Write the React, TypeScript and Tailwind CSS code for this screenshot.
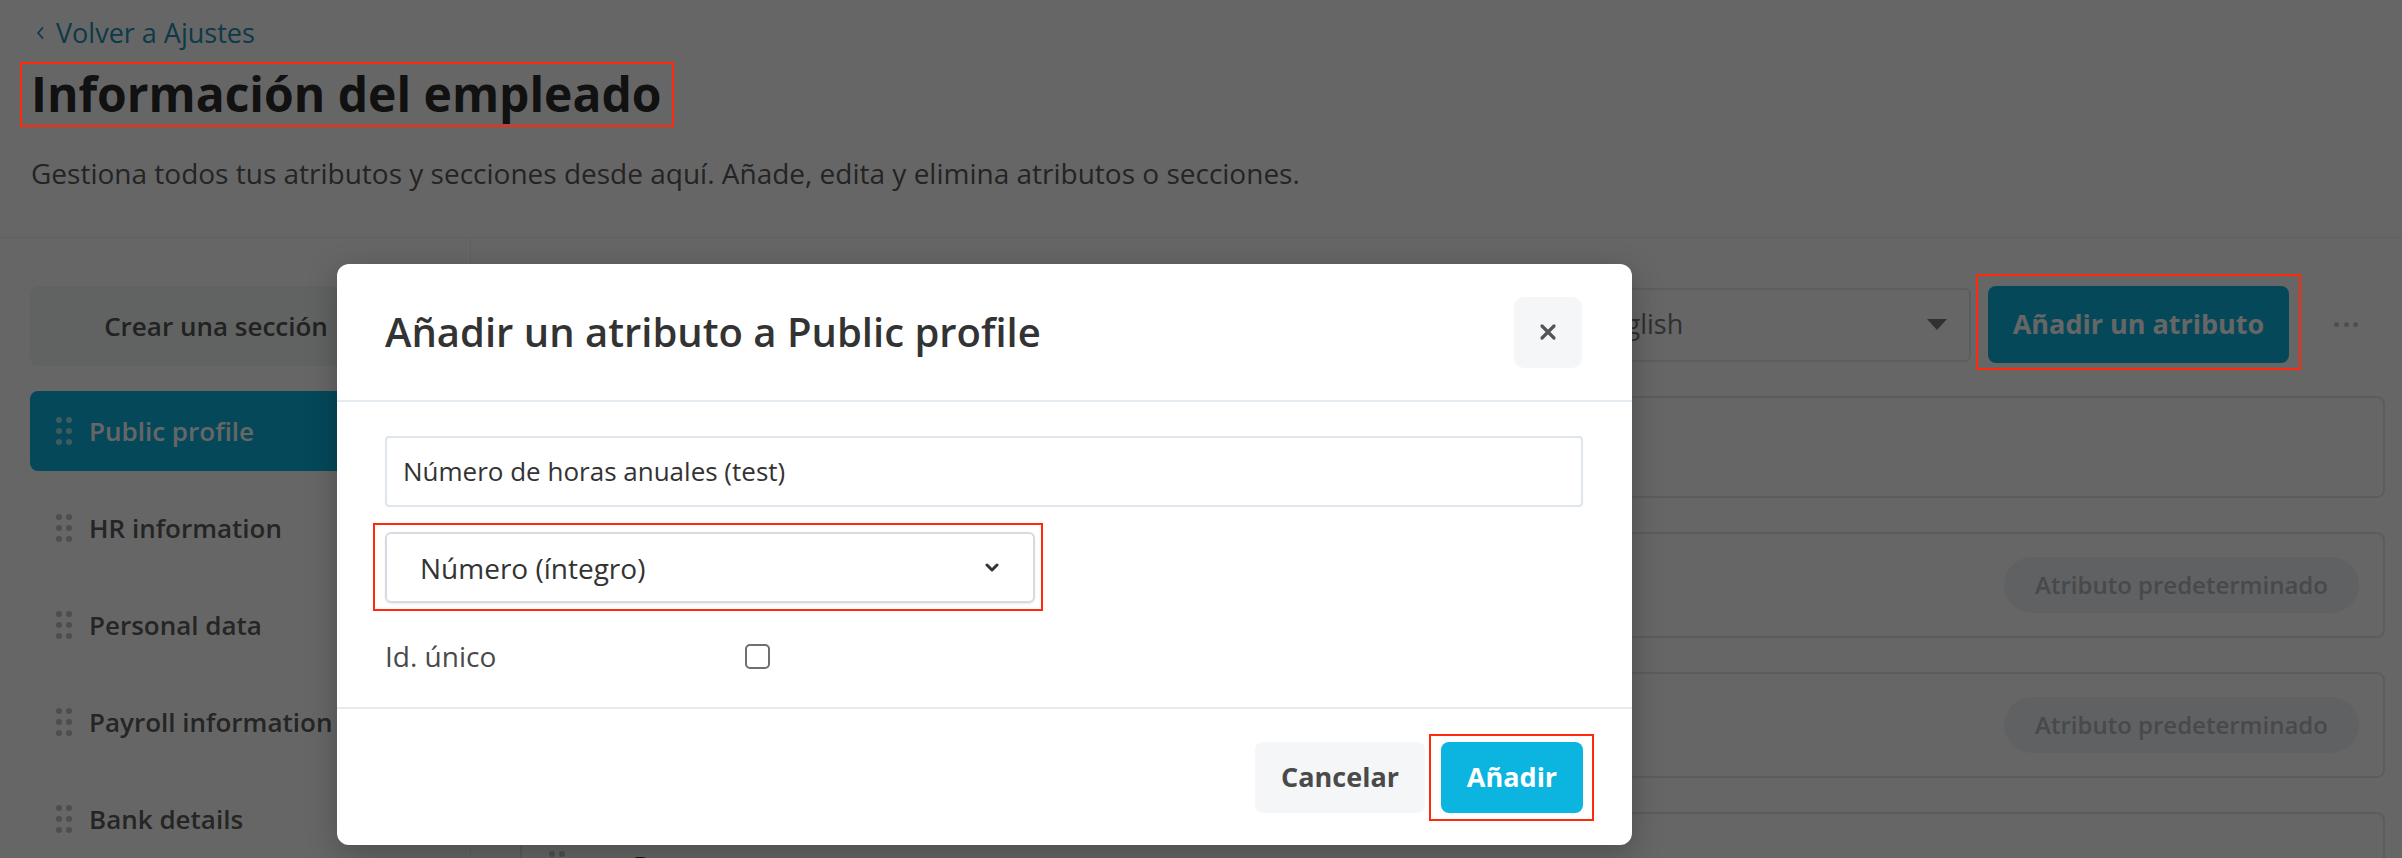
import React from 'react'

function DragDots({ className = '' }: { className?: string }) {
  return (
    <div className={`grid grid-cols-2 gap-x-[4px] gap-y-[5px] ${className}`}>
      {[0, 1, 2, 3, 4, 5].map((i) => (
        <span key={i} className="w-[6px] h-[6px] rounded-full bg-current" />
      ))}
    </div>
  )
}

const sections = ['Public profile', 'HR information', 'Personal data', 'Payroll information', 'Bank details']

function AttributeCard({ label, badge = false, tall = true }: { label: string; badge?: boolean; tall?: boolean }) {
  return (
    <div
      className={`flex items-center justify-between rounded-[8px] border-2 border-[#e2e7ee] pl-[27px] pr-[24px] ${
        tall ? 'h-[106px]' : 'h-[102px]'
      }`}
    >
      <div className="flex items-center">
        <DragDots className="text-[#c4c8cc]" />
        <svg className="ml-[19px]" width="10" height="16" viewBox="0 0 10 16" fill="none">
          <path d="M2 2l6 6-6 6" stroke="#555" strokeWidth="2.5" strokeLinecap="round" strokeLinejoin="round" />
        </svg>
        <span className="ml-[39px] text-[26px] font-semibold text-[#333]">{label}</span>
      </div>
      {badge && (
        <span className="flex h-[56px] w-[355px] items-center justify-center rounded-full bg-[#f1f2f4] text-[24px] font-semibold text-[#b5b7ba]">
          Atributo predeterminado
        </span>
      )}
    </div>
  )
}

export default function App() {
  return (
    <div className="relative h-[858px] w-[2402px] overflow-hidden bg-white font-['Open_Sans',sans-serif]">
      {/* Page header */}
      <header className="h-[238px] border-b border-[#e9edf1] pl-[31px] pt-[15px]">
        <a className="flex h-[36px] items-center text-[27px] text-[#2191b4]">
          <svg className="ml-[5px]" width="8" height="14" viewBox="0 0 8 14" fill="none">
            <path d="M6.5 2L2 7l4.5 5" stroke="#2191b4" strokeWidth="1.8" strokeLinecap="round" strokeLinejoin="round" />
          </svg>
          <span className="ml-[12px]">Volver a Ajustes</span>
        </a>
        <h1 className="mt-[14px] text-[48px] font-bold leading-[58px] text-[#2b2b2b]">Información del empleado</h1>
        <p className="mt-[31px] text-[28px] leading-[38px] text-[#5a5a5a]">
          Gestiona todos tus atributos y secciones desde aquí. Añade, edita y elimina atributos o secciones.
        </p>
      </header>

      <div className="flex h-[620px]">
        {/* Sidebar */}
        <aside className="w-[471px] shrink-0 border-r border-[#e9edf1] px-[30px] pt-[48px]">
          <button className="flex h-[80px] w-[372px] items-center justify-center rounded-[8px] bg-[#f3f4f6] text-[26px] font-semibold text-[#555]">
            Crear una sección
          </button>
          <nav className="mt-[25px] flex flex-col gap-[17px]">
            {sections.map((s, i) => (
              <div
                key={s}
                className={`flex h-[80px] items-center gap-[17px] rounded-[8px] pl-[26px] text-[26px] font-semibold ${
                  i === 0 ? 'bg-[#0bb5e0] text-white' : 'text-[#5c5c5c]'
                }`}
              >
                <DragDots className={i === 0 ? 'text-white/60' : 'text-[#c2c2c2]'} />
                <span>{s}</span>
              </div>
            ))}
          </nav>
        </aside>

        {/* Main */}
        <main className="flex-1 pl-[49px] pr-[17px] pt-[48px]">
          <div className="flex h-[77px] items-center justify-end">
            <div className="flex h-[74px] w-[420px] items-center justify-between rounded-[6px] border-2 border-[#e6e8eb] pl-[41px] pr-[22px] text-[27px] text-[#777]">
              <span>English</span>
              <svg width="20" height="11" viewBox="0 0 20 11">
                <path d="M0 0h20L10 11z" fill="#7a7a7a" />
              </svg>
            </div>
            <button className="ml-[17px] h-[77px] w-[301px] rounded-[8px] bg-[#0bb5e0] text-[27px] font-bold text-white">
              Añadir un atributo
            </button>
            <div className="ml-[45px] mr-[27px] flex w-[24px] justify-between">
              <span className="h-[5px] w-[5px] rounded-full bg-[#c4c4c4]" />
              <span className="h-[5px] w-[5px] rounded-full bg-[#c4c4c4]" />
              <span className="h-[5px] w-[5px] rounded-full bg-[#c4c4c4]" />
            </div>
          </div>
          <div className="mt-[33px] flex flex-col gap-[34px]">
            <AttributeCard label="Public profile" tall={false} />
            <AttributeCard label="Nombre" badge />
            <AttributeCard label="Apellidos" badge />
            <AttributeCard label="Departamento" />
          </div>
        </main>
      </div>

      {/* Overlay */}
      <div className="absolute inset-0 bg-black/60" />

      {/* Modal */}
      <div className="absolute left-[337px] top-[264px] flex h-[581px] w-[1295px] flex-col rounded-[12px] bg-white shadow-[0_8px_30px_rgba(0,0,0,0.25)]">
        <div className="flex h-[138px] shrink-0 items-center justify-between border-b-2 border-[#e3eaf0] pl-[48px] pr-[50px]">
          <h2 className="text-[40px] font-semibold text-[#333]">Añadir un atributo a Public profile</h2>
          <button className="flex h-[71px] w-[68px] items-center justify-center rounded-[10px] bg-[#f5f6f8]">
            <svg width="18" height="18" viewBox="0 0 18 18" fill="none">
              <path d="M3 3l12 12M15 3L3 15" stroke="#555" strokeWidth="3.2" strokeLinecap="round" />
            </svg>
          </button>
        </div>

        <div className="flex-1 pl-[48px] pr-[49px] pt-[34px]">
          <div className="flex h-[71px] items-center rounded-[4px] border-2 border-[#dfe6ed] pl-[16px] text-[26px] text-[#333]">
            Número de horas anuales (test)
          </div>
          <div className="mt-[25px] flex h-[71px] w-[650px] items-center justify-between rounded-[6px] border-2 border-[#d5dbe0] pl-[33px] pr-[34px] text-[28px] text-[#333] shadow-[0_1px_2px_rgba(0,0,0,0.08)]">
            <span>Número (íntegro)</span>
            <svg width="14" height="9" viewBox="0 0 14 9" fill="none">
              <path d="M2 2l5 5 5-5" stroke="#333" strokeWidth="3" strokeLinecap="round" strokeLinejoin="round" />
            </svg>
          </div>
          <div className="mt-[37px] flex h-[32px] items-center">
            <span className="w-[360px] text-[28px] leading-[32px] text-[#4a4a4a]">Id. único</span>
            <span className="h-[25px] w-[25px] rounded-[5px] border-[2.5px] border-[#6f6f6f]" />
          </div>
        </div>

        <div className="flex h-[138px] shrink-0 items-center justify-end gap-[16px] border-t-2 border-[#e3eaf0] pr-[49px]">
          <button className="h-[71px] w-[170px] rounded-[8px] bg-[#f5f6f8] text-[27px] font-bold text-[#4a4a4a]">
            Cancelar
          </button>
          <button className="h-[71px] w-[142px] rounded-[8px] bg-[#0bb5e0] text-[27px] font-bold text-white">
            Añadir
          </button>
        </div>
      </div>

      {/* Annotation boxes */}
      <div className="pointer-events-none absolute left-[20px] top-[62px] h-[65px] w-[654px] border-2 border-[#ff2a0e]" />
      <div className="pointer-events-none absolute left-[1976px] top-[274px] h-[96px] w-[325px] border-2 border-[#ff2a0e]" />
      <div className="pointer-events-none absolute left-[373px] top-[523px] h-[88px] w-[670px] border-2 border-[#ff2a0e]" />
      <div className="pointer-events-none absolute left-[1429px] top-[734px] h-[87px] w-[165px] border-2 border-[#ff2a0e]" />
    </div>
  )
}
